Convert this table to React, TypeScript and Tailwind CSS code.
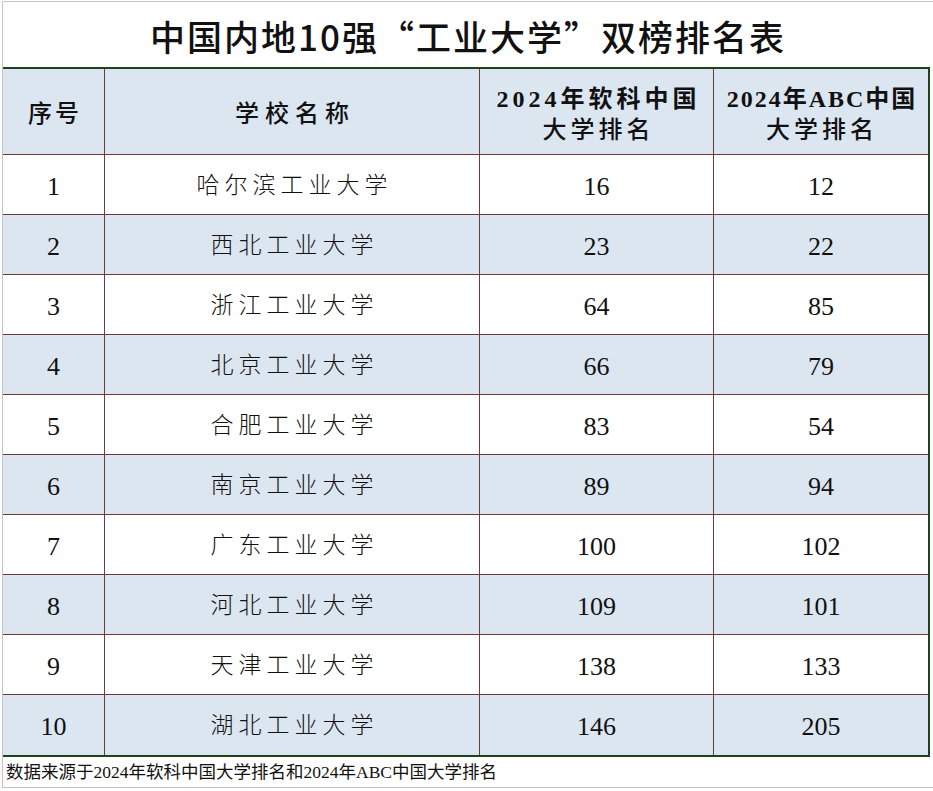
const ROWS: [number, string, number, number][] = [
  [1, "哈尔滨工业大学", 16, 12],
  [2, "西北工业大学", 23, 22],
  [3, "浙江工业大学", 64, 85],
  [4, "北京工业大学", 66, 79],
  [5, "合肥工业大学", 83, 54],
  [6, "南京工业大学", 89, 94],
  [7, "广东工业大学", 100, 102],
  [8, "河北工业大学", 109, 101],
  [9, "天津工业大学", 138, 133],
  [10, "湖北工业大学", 146, 205],
];

const cell = "flex items-center justify-center border-r border-[#6e3b3b]";

export default function App() {
  return (
    <div className="w-[933px] h-[791px] bg-white pt-[1px] pl-[2px] overflow-hidden font-['Liberation_Serif','Noto_Sans_CJK_SC',serif] text-[#111]">
      <div className="h-[787px] border-l border-t border-[#c4c4c4] flex flex-col">
        {/* 标题 */}
        <div className="h-[66px] flex items-center justify-center font-['Noto_Sans_CJK_SC',sans-serif] text-[35px] font-medium tracking-[2px] pt-[4px]">
          中国内地10强“工业大学”双榜排名表
        </div>

        {/* 表格 */}
        <div className="w-[927px] border-t-2 border-r-2 border-b-2 border-[#1d431d]">
          <div className="grid grid-cols-[102px_375px_234px_214px] h-[86px] bg-[#dce6f1] border-b border-[#6e3b3b] font-medium text-[24px]">
            <div className={`${cell} tracking-[3px] pl-[3px] pt-[6px]`}>序号</div>
            <div className={`${cell} tracking-[6px] pl-[6px] pt-[6px]`}>学校名称</div>
            <div className={`${cell} flex-col leading-[31px] tracking-[4px] pl-[4px] pt-[8px]`}>
              <span className="font-bold">2024年软科中国</span>
              <span>大学排名</span>
            </div>
            <div className="flex flex-col items-center justify-center leading-[31px] tracking-[2px] pl-[2px] pt-[8px]">
              <span className="font-bold">2024年ABC中国</span>
              <span className="tracking-[4px]">大学排名</span>
            </div>
          </div>
          {ROWS.map(([i, name, a, b], idx) => (
            <div
              key={i}
              className={`grid grid-cols-[102px_375px_234px_214px] h-[60px] text-[26px] ${idx % 2 === 1 ? "bg-[#dce6f1]" : "bg-white"} ${idx < ROWS.length - 1 ? "border-b border-[#6e3b3b]" : ""}`}
            >
              <div className={`${cell} pt-[4px]`}>{i}</div>
              <div className={`${cell} pt-[4px] text-[23px] font-light tracking-[5px] pl-[5px]`}>{name}</div>
              <div className={`${cell} pt-[4px]`}>{a}</div>
              <div className="flex items-center justify-center pt-[4px]">{b}</div>
            </div>
          ))}
        </div>

        {/* 来源 */}
        <div className="h-[32px] flex items-center pl-[3px] border-b border-[#c4c4c4] text-[17.5px] whitespace-nowrap">
          数据来源于2024年软科中国大学排名和2024年ABC中国大学排名
        </div>
      </div>
    </div>
  );
}
